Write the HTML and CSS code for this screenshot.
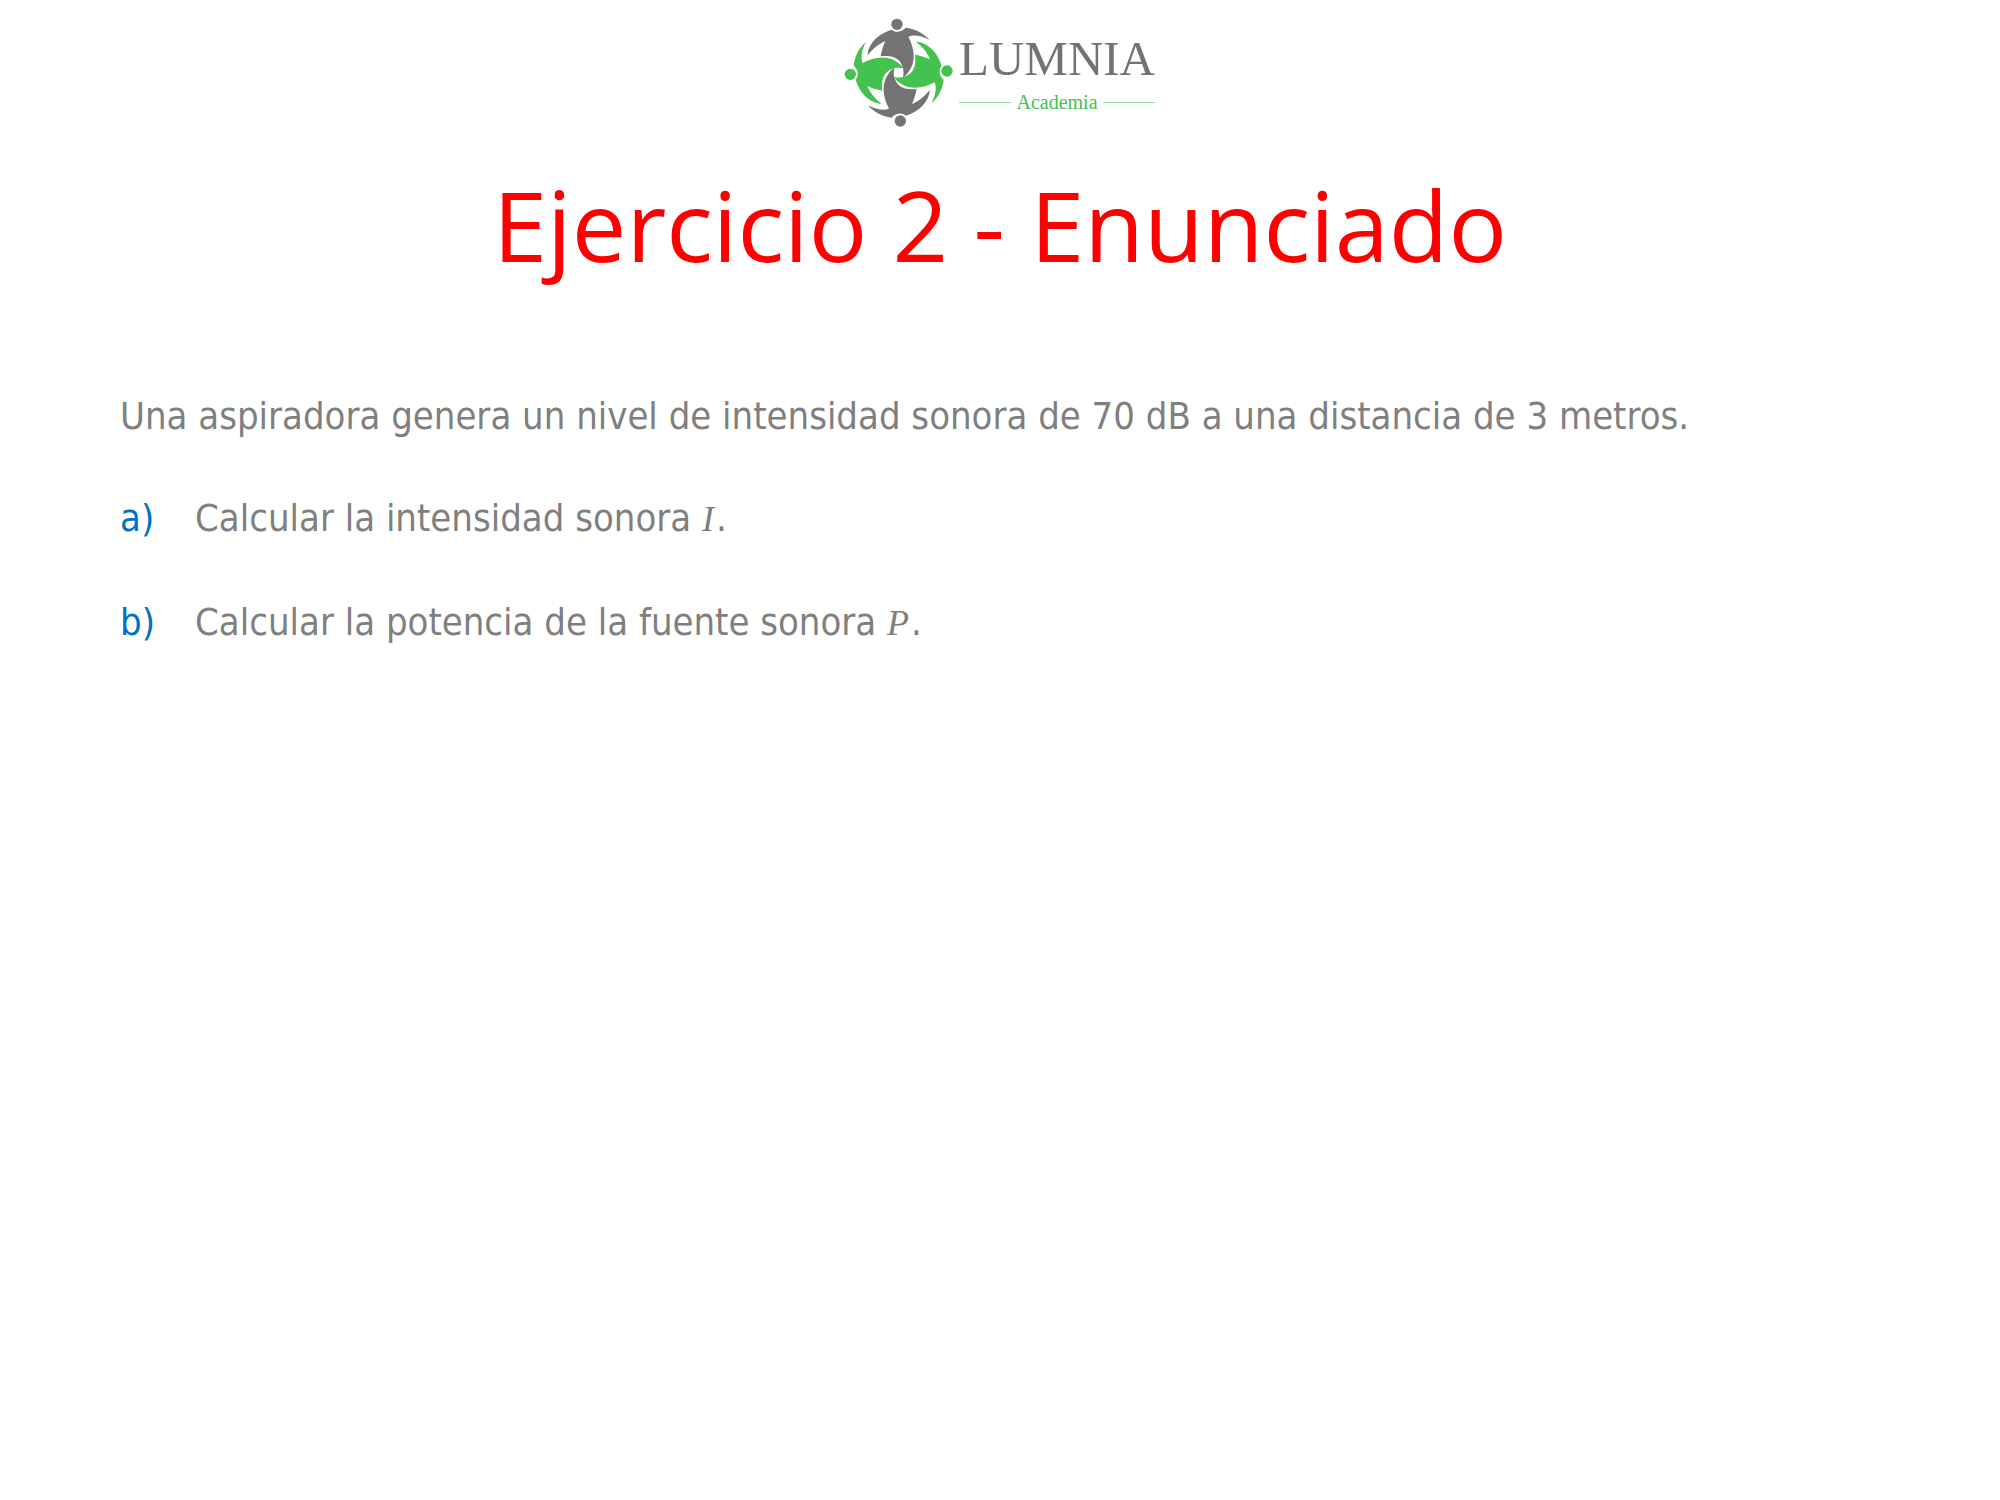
FILE: index.html
```html
<!DOCTYPE html>
<html lang="es">
<head>
<meta charset="utf-8">
<title>Ejercicio 2 - Enunciado</title>
<link rel="stylesheet" href="styles.css">
</head>
<body>
<div class="slide">
  <header class="brand">
    <svg class="mark" viewBox="0 0 348 348" aria-hidden="true">
      <defs>
        <g id="fig">
          <circle cx="171" cy="31" r="17"/>
          <path d="M83 124C83 95 110 60 155 47C165 56 185 56 197 41C225 44 252 58 268 78C250 68 225 60 205 68C222 100 230 140 207 172C202 180 196 186 189 190C194 170 188 150 175 138C165 128 145 124 122 127C125 110 130 95 136 82C115 90 98 105 83 124Z"/>
        </g>
      </defs>
      <use href="#fig" class="grey"/>
      <use href="#fig" class="green" transform="rotate(90 176 176)"/>
      <use href="#fig" class="grey" transform="rotate(180 176 176)"/>
      <use href="#fig" class="green" transform="rotate(270 176 176)"/>
    </svg>
    <div class="wordmark">
      <div class="name">LUMNIA</div>
      <div class="sub"><span class="rule"></span><span>Academia</span><span class="rule"></span></div>
    </div>
  </header>
  <h1 class="title">Ejercicio 2 - Enunciado</h1>
  <p class="intro">Una aspiradora genera un nivel de intensidad sonora de 70 dB a una distancia de 3 metros.</p>
  <ol class="items">
    <li class="item"><span class="mark-letter">a)</span><span>Calcular la intensidad sonora <i class="var">I</i>.</span></li>
    <li class="item"><span class="mark-letter">b)</span><span>Calcular la potencia de la fuente sonora <i class="var">P</i>.</span></li>
  </ol>
</div>
</body>
</html>
```
FILE: styles.css
```css
html, body { margin: 0; padding: 0; background: #fff; }
.slide { width: 2000px; height: 1500px; box-sizing: border-box; padding: 14px 120px 0; font-family: "DejaVu Sans Condensed", "DejaVu Sans", sans-serif; color: #7f7f7f; }
.brand { display: flex; justify-content: center; align-items: flex-start; gap: 3px; height: 116px; padding-right: 5px; }
.mark { width: 116px; height: 116px; display: block; }
.grey { fill: #737373; }
.green { fill: #43c24f; }
.wordmark { width: 196px; font-family: "Liberation Serif", serif; padding-top: 20px; }
.name { font-size: 49px; line-height: 50px; color: #737373; text-align: center; white-space: nowrap; }
.sub { display: flex; align-items: center; gap: 5px; font-size: 20px; line-height: 22px; color: #43c24f; margin-top: 7px; }
.rule { flex: 1; height: 1px; background: #8edc95; }
.title { margin: 40px 0 0; font-family: "Open Sans", sans-serif; font-weight: 400; font-size: 97.4px; line-height: 110px; color: #ff0000; text-align: center; white-space: nowrap; }
.intro { margin: 114px 0 0; font-size: 37.9px; line-height: 44px; white-space: nowrap; font-stretch: condensed; }
.items { list-style: none; margin: 58px 0 0; padding: 0; display: flex; flex-direction: column; gap: 59px; font-stretch: condensed; }
.item { display: flex; font-size: 37.9px; line-height: 44px; white-space: nowrap; }
.mark-letter { width: 75px; color: #0070c0; }
.var { font-family: "Liberation Serif", serif; font-size: 36px; letter-spacing: 2px; }
```
